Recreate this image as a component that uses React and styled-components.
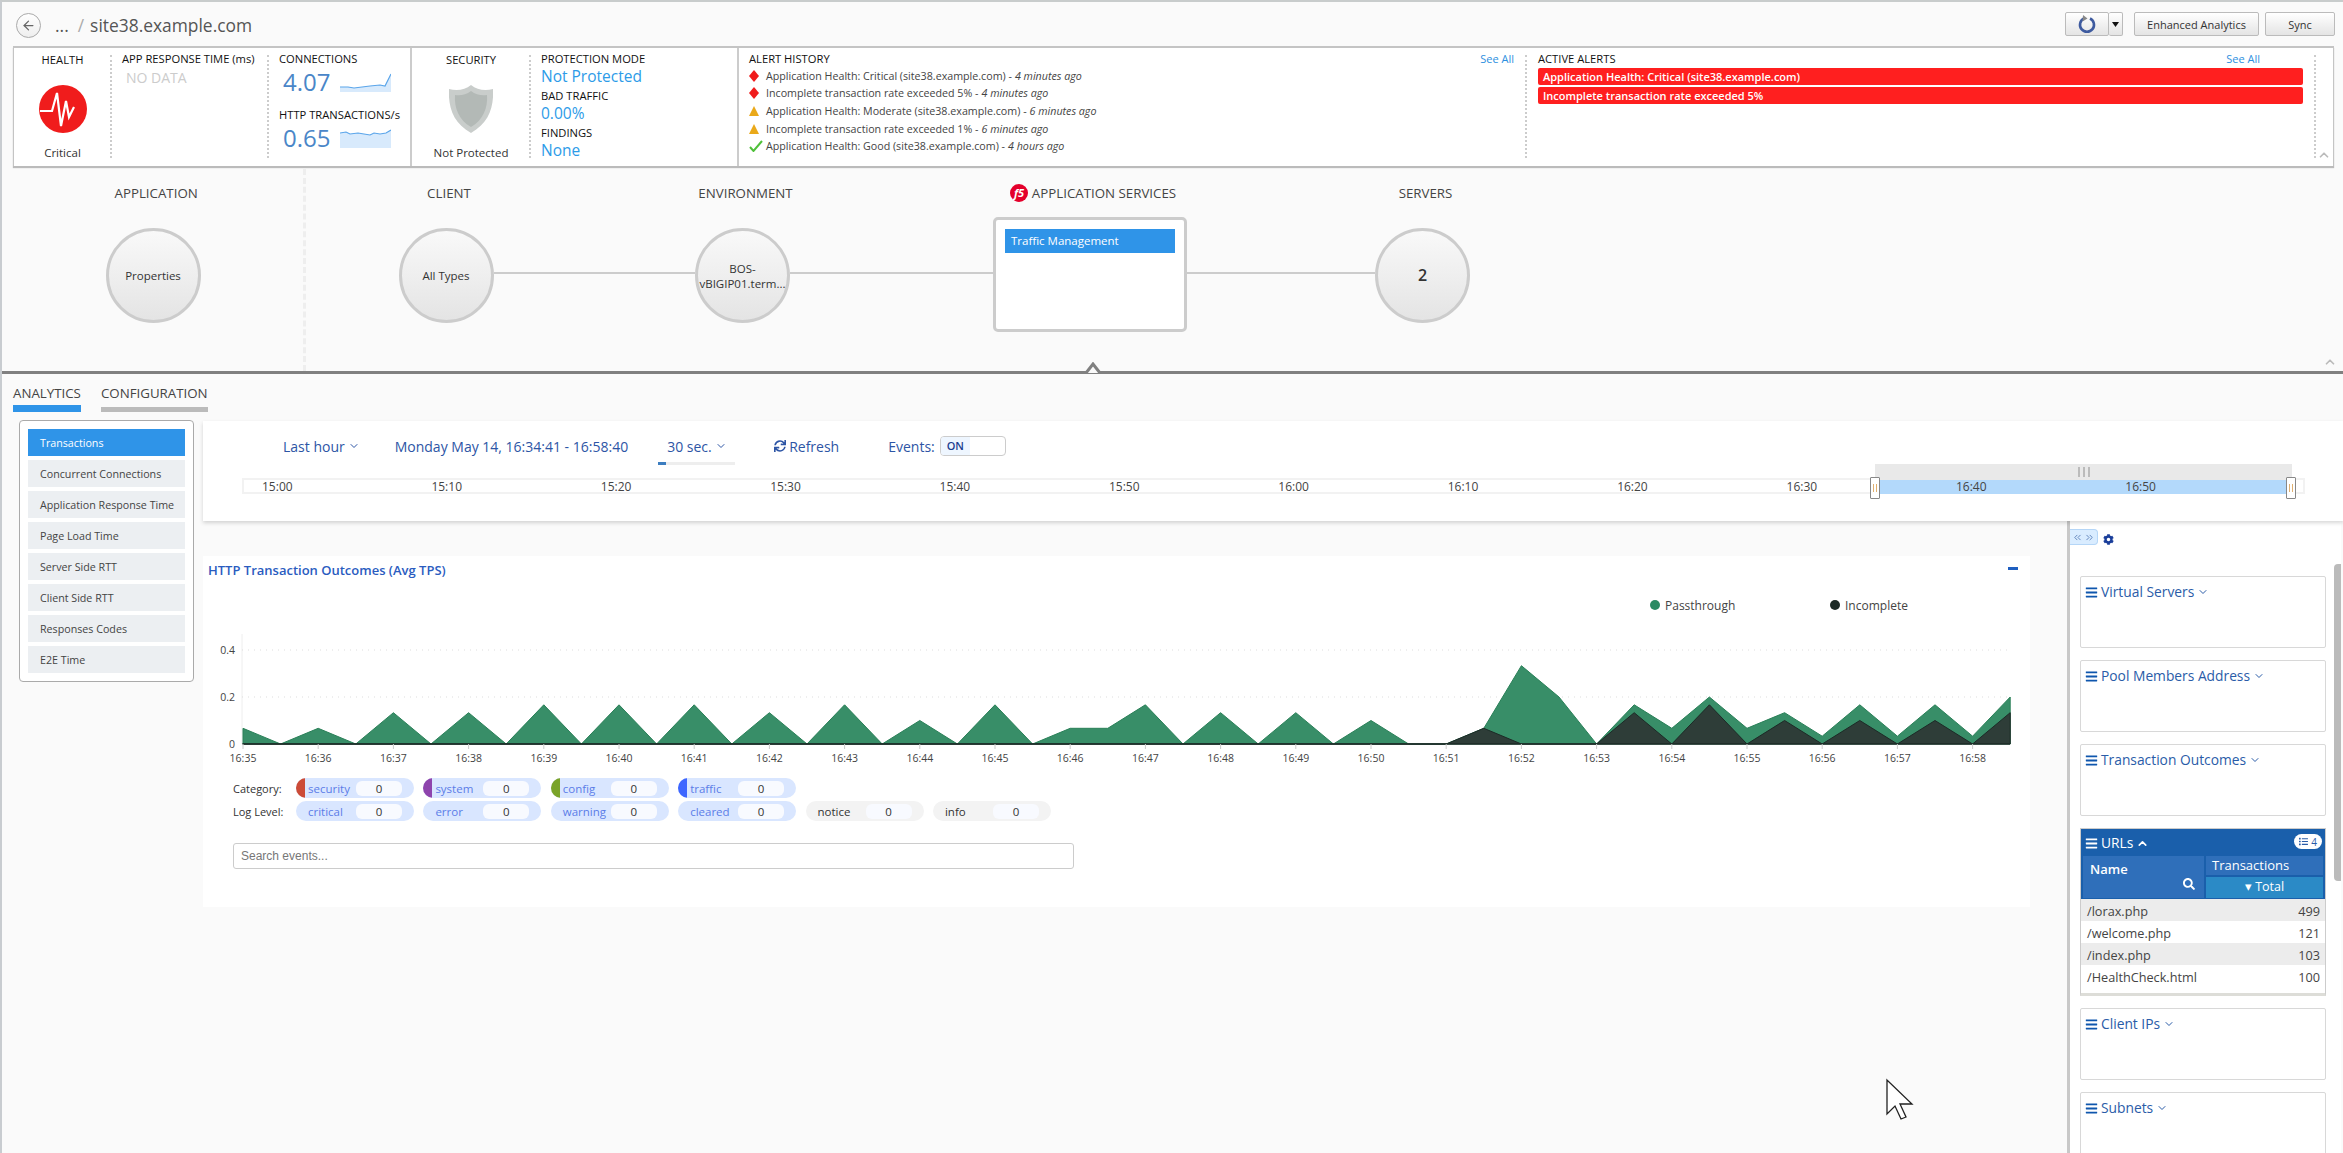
import React from 'react';
import styled, { createGlobalStyle } from 'styled-components';
import { ArrowLeft, ChevronDown, ChevronUp, ChevronsLeft, ChevronsRight } from 'lucide-react';
import { FaBars, FaCog, FaList, FaSearch, FaSync } from 'react-icons/fa';

const GlobalStyle = createGlobalStyle`
  html, body {
    margin: 0;
    padding: 0;
    background: #fafafa;
    font-family: "Open Sans", "Liberation Sans", sans-serif;
    color: #333;
  }
  * { box-sizing: border-box; }
`;

const Page = styled.div`
  position: relative;
  width: 2343px;
  height: 1153px;
  overflow: hidden;
  display: flex;
  flex-direction: column;
  background: #fafafa;
  border-top: 2px solid #c8cccc;
  border-left: 2px solid #c8ccd0;

  &::before {
    content: '';
    position: absolute;
    left: -2px;
    top: 21px;
    width: 2px;
    height: 20px;
    background: #3f5060;
  }
`;

/* header */
const Header = styled.div`
  height: 44px;
  flex: none;
  display: flex;
  align-items: center;
  padding: 2px 8px 0 14px;
`;

const BackButton = styled.div`
  width: 25px;
  height: 25px;
  border-radius: 50%;
  border: 1px solid #aaa;
  background: linear-gradient(#fff, #eee);
  color: #666;
  display: flex;
  align-items: center;
  justify-content: center;
`;

const Crumbs = styled.div`
  margin-left: 14px;
  font-size: 17.4px;
  color: #555;
  display: flex;
  gap: 6px;
`;

const CrumbSlash = styled.span`
  color: #aaa;
  margin-left: 3px;
`;

const HeaderButtons = styled.div`
  margin-left: auto;
  margin-bottom: 2px;
  display: flex;
  align-items: center;
  gap: 6px;
`;

const Button = styled.div`
  height: 24px;
  width: ${p => p.$width}px;
  border: 1px solid #bbb;
  border-radius: 2px;
  background: linear-gradient(#fff, #e4e4e4);
  font-size: 11px;
  color: #333;
  display: flex;
  align-items: center;
  justify-content: center;
`;

const RefreshGroup = styled.div`
  display: flex;
  margin-right: 5px;
`;

const RefreshPart = styled(Button)`
  & + & {
    border-left: 0;
  }
`;

/* summary panel */
const Summary = styled.div`
  position: relative;
  flex: none;
  height: 120px;
  margin: 0 9px 0 11px;
  display: flex;
  background: #fff;
  border-top: 2px solid #c4c4c4;
  border-left: 1px solid #c4c4c4;
  border-right: 1px solid #c4c4c4;
  box-shadow: 0 2px 1px #bbb;
`;

const Group = styled.div`
  display: flex;
  flex: none;
  width: ${p => p.$width}px;
  border-left: ${p => (p.$first ? '0' : '2px solid #ccc')};
`;

const Dots = styled.div`
  flex: none;
  width: 0;
  margin: 7px 0 8px;
  border-left: 2px dotted #ccc;
`;

const Cell = styled.div`
  flex: none;
  width: ${p => p.$width}px;
  padding: 4px 0 0 ${p => p.$pad || 10}px;
  display: flex;
  flex-direction: column;
  align-items: ${p => (p.$center ? 'center' : 'flex-start')};
  position: relative;
`;

const Label = styled.div`
  font-size: 11.2px;
  line-height: 14px;
  color: #111;
  white-space: nowrap;
  margin-top: ${p => p.$top || 0}px;
`;

const StatusText = styled.div`
  font-size: 11.5px;
  line-height: 16px;
  color: #333;
  white-space: nowrap;
  margin-top: auto;
  margin-bottom: 5px;
`;

const NoData = styled.div`
  font-size: 14px;
  line-height: 18px;
  color: #ccc;
  margin: 3px 0 0 4px;
`;

const MetricRow = styled.div`
  display: flex;
  align-items: center;
  gap: 10px;
  margin: 3px 0 4px 4px;
  height: 26px;
`;

const MetricValue = styled.div`
  font-size: 24px;
  line-height: 26px;
  color: #4a86c8;
`;

const BlueValue = styled.div`
  font-size: 15.5px;
  line-height: 20px;
  color: #2d9be8;
  margin-bottom: 3px;
`;

const HealthIcon = styled.svg`
  margin-top: 18px;
`;

const HistoryList = styled.div`
  margin-top: 1px;
  margin-left: 0;
`;

const HistoryRow = styled.div`
  display: flex;
  align-items: center;
  height: 17.6px;
  font-size: 10.7px;
  color: #444;
  white-space: nowrap;
`;

const HistoryIcon = styled.div`
  width: 17px;
  display: flex;
  flex: none;
`;

const Ago = styled.em`
  margin-left: 3px;
`;

const SeeAll = styled.div`
  position: absolute;
  top: 3px;
  right: ${p => p.$right}px;
  font-size: 11px;
  color: #2d8fe0;
`;

const AlertBar = styled.div`
  width: 765px;
  height: 17px;
  margin-top: ${p => p.$top || 0}px;
  padding-left: 5px;
  background: #ff1f1f;
  border-radius: 2px;
  color: #fff;
  font-size: 11px;
  font-weight: 600;
  line-height: 17px;
  white-space: nowrap;
`;

const Collapse = styled.div`
  position: absolute;
  right: ${p => p.$right}px;
  bottom: ${p => p.$bottom}px;
  color: #bbb;
  display: flex;
`;

/* pipeline */
const Pipeline = styled.div`
  position: relative;
  flex: none;
  height: 205px;
  margin-top: 3px;
  display: flex;
  border-bottom: 3px solid #808080;
`;

const AppColumn = styled.div`
  flex: none;
  width: 304px;
  border-right: 3px dashed #eee;
  padding: 15px 0 0 103.5px;
`;

const AppHead = styled.div`
  font-size: 13.3px;
  line-height: 18px;
  color: #444;
  margin-left: 9px;
  margin-bottom: 26px;
`;

const Flow = styled.div`
  margin-left: 92.5px;
  padding-top: 15px;
  display: grid;
  grid-template-columns: 95px 201.5px 95px 203px 194px 188px 95px;
  grid-template-rows: 33px auto;
  align-items: start;
`;

const FlowHead = styled.div`
  grid-column: ${p => p.$col};
  justify-self: center;
  padding-left: 6px;
  font-size: 13.3px;
  line-height: 18px;
  color: #444;
  white-space: nowrap;
  display: flex;
  align-items: center;
  gap: 4px;
`;

const Node = styled.div`
  grid-row: 2;
  width: 95px;
  height: 95px;
  margin-top: ${p => p.$top || 0}px;
  border-radius: 50%;
  border: 3px solid #ccc;
  background: linear-gradient(#f9f9f9, #e4e4e4);
  display: flex;
  align-items: center;
  justify-content: center;
  text-align: center;
  font-size: ${p => (p.$big ? 16 : 11.5)}px;
  font-weight: ${p => (p.$big ? 600 : 400)};
  line-height: 15px;
  color: #333;
`;

const Connector = styled.div`
  grid-row: 2;
  height: 2px;
  margin-top: 55px;
  background: #ccc;
`;

const ServiceBox = styled.div`
  grid-row: 2;
  height: 115px;
  padding: 9px;
  background: #fff;
  border: 3px solid #ccc;
  border-radius: 5px;
`;

const ServiceItem = styled.div`
  height: 24px;
  padding-left: 6px;
  background: #2f94e8;
  color: #fff;
  font-size: 11.5px;
  line-height: 24px;
`;

const Notch = styled.svg`
  position: absolute;
  left: 1079px;
  bottom: -3px;
`;

/* tabs */
const Tabs = styled.div`
  flex: none;
  height: 38px;
  display: flex;
  gap: 20px;
  padding: 10px 0 0 11px;
`;

const Tab = styled.div`
  height: 28px;
  font-size: 13.3px;
  line-height: 18px;
  color: #444;
  border-bottom: ${p => (p.$active ? '7px solid #2f94e8' : '5px solid #bbb')};
  padding-bottom: 3px;
  align-self: flex-start;
`;

/* main area */
const Main = styled.div`
  flex: 1;
  min-height: 0;
  display: flex;
`;

const NavBox = styled.div`
  flex: none;
  align-self: flex-start;
  width: 175px;
  margin: 8px 0 0 17px;
  padding: 8px;
  display: flex;
  flex-direction: column;
  gap: 4px;
  background: #fff;
  border: 1px solid #aaa;
  border-radius: 4px;
`;

const NavItem = styled.div`
  height: 27px;
  padding-left: 12px;
  background: ${p => (p.$active ? '#2f94e8' : '#eceff2')};
  color: ${p => (p.$active ? '#fff' : '#444')};
  font-size: 10.7px;
  line-height: 28px;
  white-space: nowrap;
`;

const Workspace = styled.div`
  flex: 1;
  min-width: 0;
  margin-left: 9px;
  display: flex;
  flex-direction: column;
`;

const TimeCard = styled.div`
  position: relative;
  z-index: 1;
  flex: none;
  height: 100px;
  margin-top: 9px;
  background: #fff;
  box-shadow: 0 2px 4px rgba(0, 0, 0, 0.16);
`;

const Controls = styled.div`
  height: 26px;
  margin-top: 12px;
  display: flex;
  align-items: center;
  padding-left: 80px;
  position: absolute;
  top: 0;
  color: #2d55a5;
  font-size: 14px;
  white-space: nowrap;
`;

const Control = styled.div`
  display: flex;
  align-items: center;
  gap: 3px;
  margin-left: ${p => p.$left || 0}px;
`;

const IntervalControl = styled(Control)`
  position: relative;
  width: 77px;
  padding-left: 9px;

  &::after {
    content: '';
    position: absolute;
    left: 0;
    right: 0;
    bottom: -9px;
    height: 3px;
    background: linear-gradient(90deg, #3c7dc0 8px, #eee 8px);
  }
`;

const Toggle = styled.div`
  width: 66px;
  height: 20px;
  margin-left: 2px;
  border: 1px solid #ccc;
  border-radius: 4px;
  display: flex;
  overflow: hidden;
`;

const ToggleOn = styled.div`
  width: 29px;
  background: #eef6ff;
  color: #1d3f8f;
  font-size: 11px;
  font-weight: 600;
  text-align: center;
  line-height: 18px;
`;

const Timeline = styled.div`
  position: absolute;
  left: 39px;
  top: 57px;
  width: 2063px;
  height: 16px;
  display: flex;
  padding-left: 18px;
  background: #fff;
  border: 2px solid #f2f2f2;
`;

const TimeTick = styled.div`
  position: relative;
  z-index: 1;
  flex: none;
  width: 169.4px;
  font-size: 12px;
  line-height: 14px;
  color: #444;
`;

const Range = styled.div`
  position: absolute;
  left: 1631px;
  top: -2px;
  bottom: -2px;
  width: 417px;
  background: #b3d9fb;
`;

const RangeGrip = styled.div`
  position: absolute;
  left: 0;
  right: 0;
  top: -14px;
  height: 16px;
  background: #e9e9e9;
  display: flex;
  justify-content: center;
  align-items: center;
  gap: 3px;
`;

const GripLine = styled.div`
  width: 2px;
  height: 10px;
  background: #bbb;
`;

const Handle = styled.div`
  position: absolute;
  z-index: 2;
  top: -3px;
  left: ${p => p.$left}px;
  width: 10px;
  height: 22px;
  background: #fff;
  border: 1px solid #888;
  border-radius: 1px;
  display: flex;
  justify-content: center;
  align-items: center;
  gap: 2px;
`;

const HandleLine = styled.div`
  width: 1px;
  height: 8px;
  background: #e0b070;
`;

const Lower = styled.div`
  flex: 1;
  min-height: 0;
  display: flex;
`;

const ChartColumn = styled.div`
  flex: none;
  width: 1864px;
`;

const ChartCard = styled.div`
  width: 1827px;
  height: 351px;
  margin-top: 35px;
  padding-top: 5px;
  background: #fff;
  position: relative;
`;

const ChartTitle = styled.div`
  margin-left: 5px;
  font-size: 13px;
  font-weight: 600;
  line-height: 18px;
  color: #2a5cbf;
`;

const Minimize = styled.div`
  position: absolute;
  right: 12px;
  top: 11px;
  width: 10px;
  height: 3px;
  background: #1f5fc0;
`;

const Legend = styled.div`
  display: flex;
  margin: 17px 0 0 1447px;
  height: 18px;
`;

const LegendItem = styled.div`
  flex: none;
  width: 180px;
  display: flex;
  align-items: center;
  gap: 5px;
  font-size: 12px;
  color: #444;
`;

const LegendDot = styled.div`
  width: 10px;
  height: 10px;
  border-radius: 50%;
  background: ${p => p.$color};
`;

const ChartSvg = styled.svg`
  display: block;
  margin-top: 20px;
`;

const Filters = styled.div`
  margin: 12px 0 0 30px;
  display: flex;
  flex-direction: column;
  gap: 3px;
`;

const FilterRow = styled.div`
  display: flex;
  align-items: center;
  gap: 9.4px;
`;

const FilterLabel = styled.div`
  width: 53.6px;
  font-size: 11px;
  color: #333;
  white-space: nowrap;
`;

const Pill = styled.div`
  position: relative;
  overflow: hidden;
  flex: none;
  width: 118px;
  height: 20px;
  padding: 2px 12px;
  display: flex;
  align-items: center;
  border-radius: 10px;
  background: ${p => (p.$muted ? '#f3f3f3' : '#d9e6ff')};
  color: ${p => (p.$muted ? '#333' : '#5b7de8')};
  font-size: 11.5px;

  &::before {
    content: '';
    display: ${p => (p.$cap ? 'block' : 'none')};
    position: absolute;
    left: 0;
    top: 0;
    bottom: 0;
    width: 9px;
    background: ${p => p.$cap};
  }
`;

const PillName = styled.div`
  flex: 1;
`;

const PillCount = styled.div`
  flex: none;
  width: 46px;
  height: 15px;
  border-radius: 6px;
  background: #f8faff;
  color: #333;
  font-size: 11.5px;
  line-height: 15px;
  text-align: center;
`;

const SearchBox = styled.div`
  width: 841px;
  height: 26px;
  margin: 22px 0 0 30px;
  padding-left: 7px;
  background: #fff;
  border: 1px solid #ccc;
  border-radius: 3px;
  color: #777;
  font-family: "Liberation Sans", sans-serif;
  font-size: 12px;
  line-height: 24px;
`;

/* right sidebar */
const Sidebar = styled.div`
  position: relative;
  flex: none;
  width: 274px;
  background: #fff;
  border-left: 3px solid #c8c8c8;
  padding-top: 8px;
`;

const SideTools = styled.div`
  display: flex;
  align-items: center;
  height: 16px;
  color: #1a3e9a;
  gap: 5px;
`;

const Shift = styled.div`
  width: 28px;
  height: 16px;
  background: #d9ecff;
  border: 1px solid #b5d6f7;
  border-left: 0;
  border-radius: 0 4px 4px 0;
  color: #5a7fb8;
  display: flex;
  align-items: center;
  justify-content: center;
  gap: 1px;
`;

const Gear = styled.div`
  display: flex;
  margin-top: 5px;
`;

const Panels = styled.div`
  margin: 31px 0 0 10px;
  display: flex;
  flex-direction: column;
  gap: 12px;
  width: 246px;
`;

const Panel = styled.div`
  height: 72px;
  flex: none;
  padding: 6px 0 0 4px;
  border: 1px solid #d8d8d8;
  border-radius: 2px;
`;

const PanelTitle = styled.div`
  display: flex;
  align-items: center;
  gap: 3px;
  font-size: 13.8px;
  line-height: 18px;
  color: #2a5ca8;
  white-space: nowrap;

  svg:first-child {
    color: #0f56ad;
  }
`;

const UrlsPanel = styled.div`
  flex: none;
  height: 168px;
  background: #fff;
  border: 1px solid #ccc;
  border-bottom: 3px solid #ddddd8;
`;

const UrlsHead = styled.div`
  background: #1a5fab;
  padding-bottom: 1px;
`;

const UrlsTitle = styled(PanelTitle)`
  position: relative;
  height: 27px;
  padding: 1px 0 0 4px;
  color: #fff;

  svg:first-child {
    color: #fff;
  }
`;

const CountBadge = styled.div`
  position: absolute;
  right: 3px;
  top: 5px;
  width: 28px;
  height: 15px;
  border-radius: 8px;
  background: #fff;
  color: #2a5ca8;
  font-size: 10px;
  display: flex;
  align-items: center;
  justify-content: center;
  gap: 3px;

  && svg {
    flex: none;
    color: #2a5ca8;
  }
`;

const UrlsColumns = styled.div`
  display: grid;
  grid-template-columns: 121px 117px;
  grid-template-rows: 19px 21px;
  gap: 2px;
  padding: 0 2px;
  color: #fff;
  font-size: 13px;
`;

const NameCell = styled.div`
  position: relative;
  grid-row: 1 / 3;
  background: #2f6fba;
  padding: 4px 0 0 7px;
  font-weight: 600;
`;

const NameSearch = styled.div`
  position: absolute;
  right: 9px;
  bottom: 8px;
  display: flex;
`;

const TransCell = styled.div`
  background: #2f6fba;
  padding-left: 6px;
  line-height: 18px;
`;

const TotalCell = styled.div`
  background: #2b8ac6;
  text-align: center;
  line-height: 20px;
  font-size: 12.5px;
`;

const UrlRow = styled.div`
  height: 22px;
  display: flex;
  justify-content: space-between;
  padding: 0 5px 0 6px;
  background: ${p => (p.$odd ? '#ececec' : '#fff')};
  font-size: 12.7px;
  line-height: 24px;
  color: #444;
`;

const Scrollbar = styled.div`
  position: absolute;
  right: 0;
  top: 43px;
  width: 7px;
  height: 317px;
  border-radius: 4px 0 0 4px;
  background: #bbb;
`;

const Cursor = styled.svg`
  position: absolute;
  left: 1883px;
  top: 1076px;
`;

const Sparkline = ({ line }) => (
  <svg width="51" height="19" viewBox="0 0 51 19">
    <path d={`${line} L51 19 L0 19 Z`} fill="#d8eafc" />
    <path d={line} fill="none" stroke="#5aa5ea" strokeWidth="1.2" />
  </svg>
);

const Diamond = () => (
  <svg width="10" height="12" viewBox="0 0 10 12"><path d="M5 0 L10 6 L5 12 L0 6 Z" fill="#f01c1c" /></svg>
);

const Warning = () => (
  <svg width="10" height="10" viewBox="0 0 10 10"><path d="M5 0 L10 10 L0 10 Z" fill="#eaa91a" /></svg>
);

const Tick = () => (
  <svg width="14" height="12" viewBox="0 0 14 12"><path d="M1 7 L4.5 11 L13 1" fill="none" stroke="#4fc03a" strokeWidth="2" /></svg>
);

const history = [
  [<Diamond />, 'Application Health: Critical (site38.example.com)', '4 minutes ago'],
  [<Diamond />, 'Incomplete transaction rate exceeded 5%', '4 minutes ago'],
  [<Warning />, 'Application Health: Moderate (site38.example.com)', '6 minutes ago'],
  [<Warning />, 'Incomplete transaction rate exceeded 1%', '6 minutes ago'],
  [<Tick />, 'Application Health: Good (site38.example.com)', '4 hours ago']
];

const navItems = [
  'Transactions',
  'Concurrent Connections',
  'Application Response Time',
  'Page Load Time',
  'Server Side RTT',
  'Client Side RTT',
  'Responses Codes',
  'E2E Time'
];

const timeTicks = ['15:00', '15:10', '15:20', '15:30', '15:40', '15:50', '16:00', '16:10', '16:20', '16:30', '16:40', '16:50'];

const categories = [
  ['security', '#cc4b37'],
  ['system', '#8e44ad'],
  ['config', '#7aa329'],
  ['traffic', '#3d66ff']
];

const levels = [
  ['critical'],
  ['error'],
  ['warning'],
  ['cleared'],
  ['notice', true],
  ['info', true]
];

const urls = [
  ['/lorax.php', 499],
  ['/welcome.php', 121],
  ['/index.php', 103],
  ['/HealthCheck.html', 100]
];

const totals = [
  0.067, 0, 0.067, 0, 0.133, 0, 0.133, 0, 0.167, 0, 0.167, 0, 0.167, 0, 0.133, 0,
  0.167, 0, 0.1, 0, 0.167, 0, 0.067, 0.067, 0.167, 0, 0.133, 0, 0.133, 0, 0.1, 0,
  0, 0.067, 0.333, 0.2, 0, 0.167, 0.067, 0.2, 0.067, 0.133, 0.033, 0.167, 0.033, 0.167, 0.033, 0.2
];

const incomplete = [
  ...new Array(33).fill(0),
  0.067, 0, 0, 0, 0.133, 0, 0.167, 0, 0.1, 0, 0.1, 0, 0.1, 0, 0.133
];

const chartX = i => 40 + 37.6 * i;
const chartY = v => 110 - v * 235;

const areaPath = values =>
  `M${chartX(0)} 110 ` +
  values.map((v, i) => `L${chartX(i).toFixed(1)} ${chartY(v).toFixed(1)}`).join(' ') +
  ` L${chartX(values.length - 1).toFixed(1)} 110 Z`;

const minuteLabels = Array.from({ length: 24 }, (_, i) => `16:${35 + i}`);

const TransactionsChart = () => (
  <ChartSvg width="1827" height="132" viewBox="0 0 1827 132">
    <path d="M39 0 V110" stroke="#eee" strokeWidth="1" />
    {[16, 63].map(y => (
      <line key={y} x1="39" x2="1807" y1={y} y2={y} stroke="#ddd" strokeDasharray="1 5" />
    ))}
    {[['0.4', 16], ['0.2', 63], ['0', 110]].map(([t, y]) => (
      <text key={t} x="32" y={y + 4} textAnchor="end" fontSize="10.5" fill="#444">{t}</text>
    ))}
    <path d={areaPath(totals)} fill="#388e68" stroke="#2a8058" strokeWidth="1" />
    <path d={areaPath(incomplete)} fill="#2e3d38" stroke="#1c2a26" strokeWidth="1" />
    <line x1="39" x2="1807" y1="110" y2="110" stroke="#1c2a26" strokeWidth="1" />
    {minuteLabels.map((label, i) => (
      <g key={label}>
        <line x1={chartX(i * 2)} x2={chartX(i * 2)} y1="110" y2="115" stroke="#ccc" />
        <text x={chartX(i * 2)} y="128" textAnchor="middle" fontSize="10.5" fill="#444">{label}</text>
      </g>
    ))}
  </ChartSvg>
);

const SidePanel = ({ title }) => (
  <Panel>
    <PanelTitle>
      <FaBars size={13} />
      {title}
      <ChevronDown size={12} />
    </PanelTitle>
  </Panel>
);

const App = () => (
  <Page>
    <GlobalStyle />
    <Header>
      <BackButton><ArrowLeft size={15} /></BackButton>
      <Crumbs>
        <span>...</span>
        <CrumbSlash>/</CrumbSlash>
        <span>site38.example.com</span>
      </Crumbs>
      <HeaderButtons>
        <RefreshGroup>
          <RefreshPart $width={44}>
            <svg width="20" height="20" viewBox="0 0 20 20">
              <path d="M7 4.5 A7 7 0 1 0 13 4.5" fill="none" stroke="#3d5a9f" strokeWidth="2.6" />
              <path d="M6 1 L10.5 4.5 L5.5 7.5 Z" fill="#888" />
            </svg>
          </RefreshPart>
          <RefreshPart $width={14}>
            <svg width="7" height="5" viewBox="0 0 7 5"><path d="M0 0 H7 L3.5 5 Z" fill="#111" /></svg>
          </RefreshPart>
        </RefreshGroup>
        <Button $width={125}>Enhanced Analytics</Button>
        <Button $width={70}>Sync</Button>
      </HeaderButtons>
    </Header>

    <Summary>
      <Group $first $width={396}>
        <Cell $width={96} $center $pad={1}>
          <Label $top={1}>HEALTH</Label>
          <HealthIcon width="48" height="48" viewBox="0 0 48 48">
            <circle cx="24" cy="24" r="24" fill="#f01c1c" />
            <path d="M1 26 H13 L18 8 L22 41 L27 16 L30 32 L35 22" fill="none" stroke="#fff" strokeWidth="2.2" />
          </HealthIcon>
          <StatusText>Critical</StatusText>
        </Cell>
        <Dots />
        <Cell $width={155}>
          <Label>APP RESPONSE TIME (ms)</Label>
          <NoData>NO DATA</NoData>
        </Cell>
        <Dots />
        <Cell $width={142}>
          <Label>CONNECTIONS</Label>
          <MetricRow>
            <MetricValue>4.07</MetricValue>
            <Sparkline line="M0 14 L8 14 L14 15 L22 14 L30 13 L40 12 L45 13 L51 1" />
          </MetricRow>
          <Label $top={9}>HTTP TRANSACTIONS/s</Label>
          <MetricRow>
            <MetricValue>0.65</MetricValue>
            <Sparkline line="M0 4 L6 3 L10 5 L18 4 L24 5 L30 6 L34 4 L40 5 L46 4 L51 1" />
          </MetricRow>
        </Cell>
      </Group>
      <Group $width={327}>
        <Cell $width={117} $center $pad={1}>
          <Label $top={1}>SECURITY</Label>
          <HealthIcon width="44" height="48" viewBox="0 0 44 48">
            <path d="M22 0 C28 5 36 6 44 4 C45 22 40 38 22 48 C4 38 -1 22 0 4 C8 6 16 5 22 0 Z" fill="#c9cdcb" />
            <path d="M22 6 C27 10 33 11 38 10 C39 23 34 35 22 42 C10 35 5 23 6 10 C11 11 17 10 22 6 Z" fill="#b3b9b6" />
          </HealthIcon>
          <StatusText>Not Protected</StatusText>
        </Cell>
        <Dots />
        <Cell $width={206}>
          <Label>PROTECTION MODE</Label>
          <BlueValue>Not Protected</BlueValue>
          <Label>BAD TRAFFIC</Label>
          <BlueValue>0.00%</BlueValue>
          <Label>FINDINGS</Label>
          <BlueValue>None</BlueValue>
        </Cell>
      </Group>
      <Group $width={1580}>
        <Cell $width={786}>
          <Label>ALERT HISTORY</Label>
          <HistoryList>
            {history.map(([icon, text, ago]) => (
              <HistoryRow key={text}>
                <HistoryIcon>{icon}</HistoryIcon>
                {text} - <Ago>{ago}</Ago>
              </HistoryRow>
            ))}
          </HistoryList>
          <SeeAll $right={11}>See All</SeeAll>
        </Cell>
        <Dots />
        <Cell $width={787} $pad={11}>
          <Label>ACTIVE ALERTS</Label>
          <AlertBar $top={2}>Application Health: Critical (site38.example.com)</AlertBar>
          <AlertBar $top={2}>Incomplete transaction rate exceeded 5%</AlertBar>
          <SeeAll $right={54}>See All</SeeAll>
        </Cell>
        <Dots />
      </Group>
      <Collapse $right={2} $bottom={4}><ChevronUp size={14} strokeWidth={3} /></Collapse>
    </Summary>

    <Pipeline>
      <AppColumn>
        <AppHead>APPLICATION</AppHead>
        <Node $top={3}>Properties</Node>
      </AppColumn>
      <Flow>
        <FlowHead $col={1}>CLIENT</FlowHead>
        <FlowHead $col={3}>ENVIRONMENT</FlowHead>
        <FlowHead $col={5}>
          <svg width="18" height="18" viewBox="0 0 18 18">
            <circle cx="9" cy="9" r="9" fill="#e4002b" />
            <text x="9" y="13" textAnchor="middle" fontSize="11" fontWeight="700" fontStyle="italic" fill="#fff">f5</text>
          </svg>
          APPLICATION SERVICES
        </FlowHead>
        <FlowHead $col={7}>SERVERS</FlowHead>
        <Node $top={11}>All Types</Node>
        <Connector />
        <Node $top={11}>BOS-<br />vBIGIP01.term...</Node>
        <Connector />
        <ServiceBox>
          <ServiceItem>Traffic Management</ServiceItem>
        </ServiceBox>
        <Connector />
        <Node $top={11} $big>2</Node>
      </Flow>
      <Notch width="24" height="12" viewBox="0 0 24 12">
        <path d="M1 11 H5 L12 2 L19 11 H23" fill="#fafafa" stroke="#808080" strokeWidth="3" />
      </Notch>
      <Collapse $right={6} $bottom={2}><ChevronUp size={14} strokeWidth={3} /></Collapse>
    </Pipeline>

    <Tabs>
      <Tab $active>ANALYTICS</Tab>
      <Tab>CONFIGURATION</Tab>
    </Tabs>

    <Main>
      <NavBox>
        {navItems.map((item, i) => (
          <NavItem key={item} $active={i === 0}>{item}</NavItem>
        ))}
      </NavBox>
      <Workspace>
        <TimeCard>
          <Controls>
            <Control>Last hour <ChevronDown size={12} /></Control>
            <Control $left={35}>Monday May 14, 16:34:41 - 16:58:40</Control>
            <IntervalControl $left={30}>30 sec. <ChevronDown size={12} /></IntervalControl>
            <Control $left={39}><FaSync size={12} />Refresh</Control>
            <Control $left={49}>Events:<Toggle><ToggleOn>ON</ToggleOn></Toggle></Control>
          </Controls>
          <Timeline>
            {timeTicks.map(t => <TimeTick key={t}>{t}</TimeTick>)}
            <Range><RangeGrip><GripLine /><GripLine /><GripLine /></RangeGrip></Range>
            <Handle $left={1626}><HandleLine /><HandleLine /></Handle>
            <Handle $left={2042}><HandleLine /><HandleLine /></Handle>
          </Timeline>
        </TimeCard>
        <Lower>
          <ChartColumn>
            <ChartCard>
              <ChartTitle>HTTP Transaction Outcomes (Avg TPS)</ChartTitle>
              <Minimize />
              <Legend>
                <LegendItem><LegendDot $color="#2a8a62" />Passthrough</LegendItem>
                <LegendItem><LegendDot $color="#1c2a26" />Incomplete</LegendItem>
              </Legend>
              <TransactionsChart />
              <Filters>
                <FilterRow>
                  <FilterLabel>Category:</FilterLabel>
                  {categories.map(([name, cap]) => (
                    <Pill key={name} $cap={cap}><PillName>{name}</PillName><PillCount>0</PillCount></Pill>
                  ))}
                </FilterRow>
                <FilterRow>
                  <FilterLabel>Log Level:</FilterLabel>
                  {levels.map(([name, muted]) => (
                    <Pill key={name} $muted={muted}><PillName>{name}</PillName><PillCount>0</PillCount></Pill>
                  ))}
                </FilterRow>
              </Filters>
              <SearchBox>Search events...</SearchBox>
            </ChartCard>
          </ChartColumn>
          <Sidebar>
            <SideTools>
              <Shift><ChevronsLeft size={11} /><ChevronsRight size={11} /></Shift>
              <Gear><FaCog size={11} /></Gear>
            </SideTools>
            <Panels>
              <SidePanel title="Virtual Servers" />
              <SidePanel title="Pool Members Address" />
              <SidePanel title="Transaction Outcomes" />
              <UrlsPanel>
                <UrlsHead>
                  <UrlsTitle>
                    <FaBars size={13} />
                    URLs
                    <ChevronUp size={13} strokeWidth={3} />
                    <CountBadge><FaList size={9} /> 4</CountBadge>
                  </UrlsTitle>
                  <UrlsColumns>
                    <NameCell>Name<NameSearch><FaSearch size={12} /></NameSearch></NameCell>
                    <TransCell>Transactions</TransCell>
                    <TotalCell>&#9662; Total</TotalCell>
                  </UrlsColumns>
                </UrlsHead>
                {urls.map(([path, count], i) => (
                  <UrlRow key={path} $odd={i % 2 === 0}><span>{path}</span><span>{count}</span></UrlRow>
                ))}
              </UrlsPanel>
              <SidePanel title="Client IPs" />
              <SidePanel title="Subnets" />
            </Panels>
            <Scrollbar />
          </Sidebar>
        </Lower>
      </Workspace>
    </Main>

    <Cursor width="30" height="44" viewBox="0 0 30 44">
      <path d="M2 2 L2 36 L10 28 L16 41 L21 39 L15 26 L27 26 Z" fill="#fff" stroke="#222" strokeWidth="1.3" />
    </Cursor>
  </Page>
);

export default App;
